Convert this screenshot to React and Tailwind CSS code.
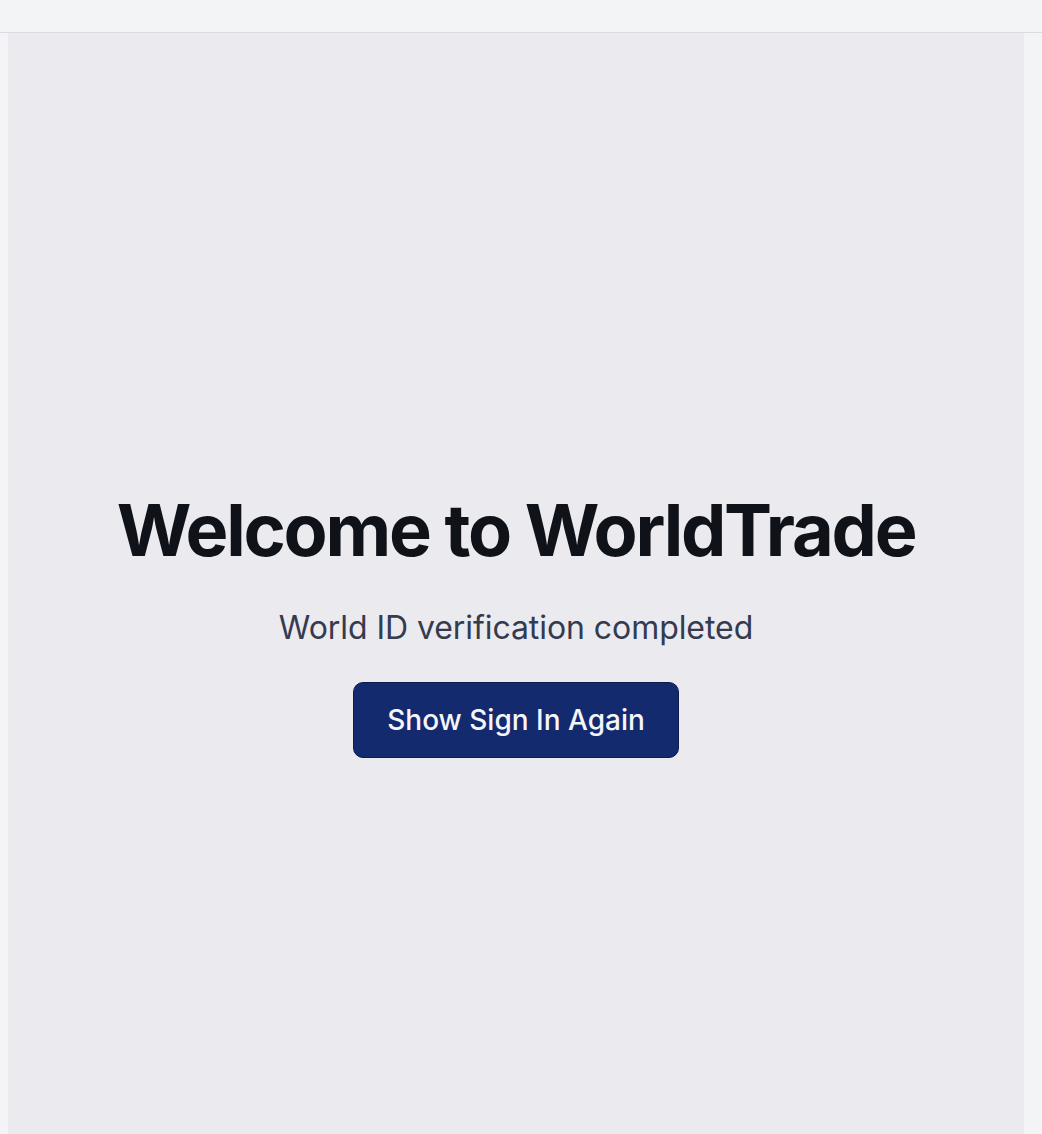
import React from "react";

const App = () => {
  return (
    <div className="min-h-screen w-full bg-[#f3f4f6] flex flex-col" style={{ fontFamily: "Inter, 'Noto Sans', sans-serif" }}>
      <header className="h-[33px] border-b border-[#dcdbe1] bg-[#f3f4f6]" />
      <div className="flex-1 flex pl-2 pr-[18px]">
        <main className="flex-1 h-[1101px] bg-[#ebeaef] flex flex-col items-center justify-center pt-[84px]">
          <h1 className="text-[72px] font-bold tracking-[-0.031em] text-[#0f1219] leading-none">
            Welcome to WorldTrade
          </h1>
          <p className="mt-[46px] text-[32px] tracking-[-0.002em] text-[#343b4f] leading-none">
            World ID verification completed
          </p>
          <button className="mt-[38px] h-[76px] px-[33px] rounded-[10px] bg-[#142a6f] border border-[#0c1c4d] text-[#f5f5fa] text-[28px] font-medium">
            Show Sign In Again
          </button>
        </main>
      </div>
    </div>
  );
};

export default App;
